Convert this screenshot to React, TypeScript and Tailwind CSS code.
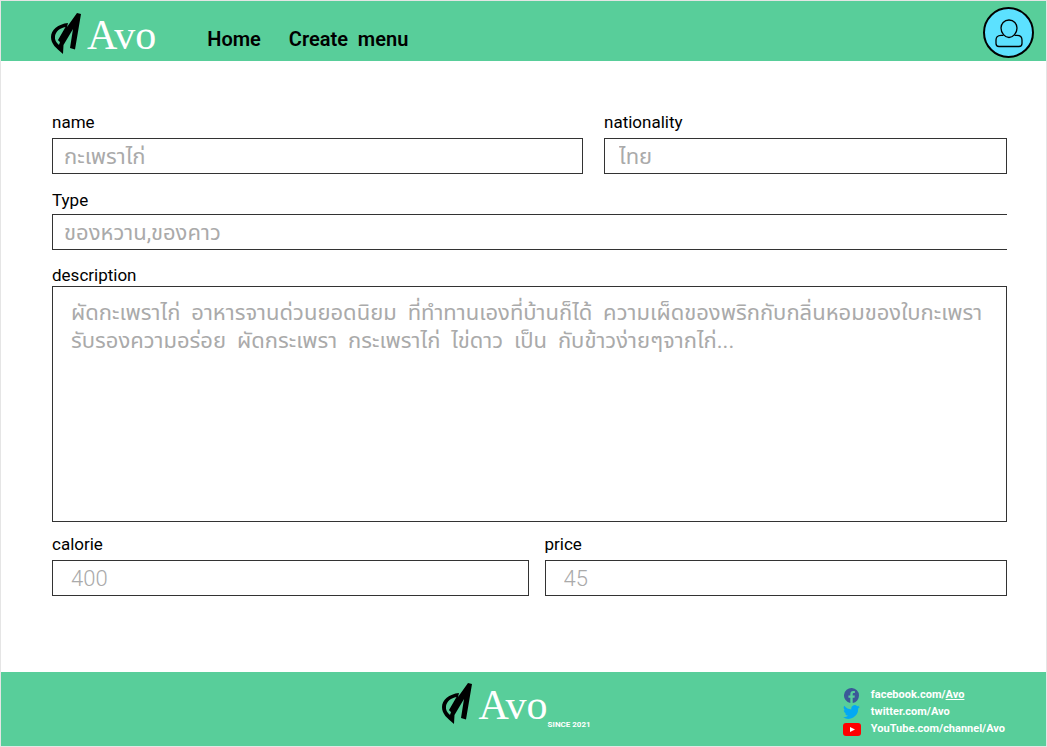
import React from "react";

const thai = "font-['Roboto','Noto_Sans_Thai','Noto_Sans',sans-serif]";
const box =
  "block h-9 w-full border border-[#333] bg-white text-[22px] outline-none placeholder:text-[#aaa] placeholder:opacity-100";

function Logo() {
  return (
    <span className="flex items-start">
      <svg viewBox="0 0 32 44" className="h-11 w-8" aria-hidden="true">
        <path
          fillRule="evenodd"
          d="M17 10 C7 11 0 17 0 24 C0 31 5 35 12 41 L12.500 32 L22 16 L19 35 L24 36.500 L30 1 L26 0 L16 14 Z M14.500 14 L7 27 L9 29 L8 32 C5 29 3.500 27 4 23 C5 18 9 15 14.500 14 Z"
        />
        <path d="M15 15.500 L7.500 27.500 L9.500 29 L17 17 Z" />
      </svg>
      <span className="pl-1 font-['Liberation_Serif',serif] text-[42px] leading-[44px] text-white">
        Avo
      </span>
    </span>
  );
}

type FieldProps = {
  id: string;
  label: string;
  placeholder: string;
  gap: string;
  input: string;
  className?: string;
};

function Field({ id, label, placeholder, gap, input, className = "" }: FieldProps) {
  return (
    <div className={`flex flex-col ${gap} ${className}`}>
      <label htmlFor={id} className="text-[17px] leading-5">
        {label}
      </label>
      <input id={id} placeholder={placeholder} className={`${box} ${input}`} />
    </div>
  );
}

function Facebook() {
  return (
    <svg viewBox="0 0 24 24" className="size-[15px]" aria-hidden="true">
      <path
        fill="#3b5998"
        d="M24 12a12 12 0 1 0-13.9 11.9v-8.4H7.1V12h3V9.4c0-3 1.8-4.7 4.6-4.7 1.3 0 2.7.2 2.7.2v3h-1.5c-1.5 0-2 .9-2 1.9V12h3.4l-.5 3.5h-2.9v8.4A12 12 0 0 0 24 12z"
      />
    </svg>
  );
}

function Twitter() {
  return (
    <svg viewBox="0 2 24 20" className="h-[14px] w-[17px]" aria-hidden="true">
      <path
        fill="#03a9f4"
        d="M24 4.6a10 10 0 0 1-2.8.8 5 5 0 0 0 2.1-2.7 10 10 0 0 1-3.1 1.2 4.9 4.9 0 0 0-8.4 4.5A14 14 0 0 1 1.7 3.1a4.9 4.9 0 0 0 1.5 6.6 5 5 0 0 1-2.2-.6v.1a4.9 4.9 0 0 0 3.9 4.8 5 5 0 0 1-2.2.1 4.9 4.9 0 0 0 4.6 3.4A10 10 0 0 1 0 19.5 14 14 0 0 0 21.5 7.1 10 10 0 0 0 24 4.6z"
      />
    </svg>
  );
}

function YouTube() {
  return (
    <svg viewBox="0 0 18 13" className="h-[13px] w-[18px]" aria-hidden="true">
      <rect width="18" height="13" rx="3" fill="#f00" />
      <path d="M7 4 L12 6.500 L7 9 Z" fill="#fff" />
    </svg>
  );
}

export default function App() {
  return (
    <div
      className={`flex min-h-screen flex-col border-x border-y border-[#e5e5e5] bg-white text-black ${thai}`}
    >
      <header className="flex h-[60px] items-start bg-[#58ce9a] pr-3 pl-[50px]">
        <a href="#home" aria-label="Avo" className="pt-3">
          <Logo />
        </a>
        <nav className="flex gap-7 pt-6 pl-[51px] text-[20px] leading-7 font-semibold whitespace-pre">
          <a href="#home">Home</a>
          <a href="#create">{"Create  menu"}</a>
        </nav>
        <button
          aria-label="Profile"
          className="mt-[6px] ml-auto flex size-[51px] items-center justify-center rounded-full border-2 border-black bg-[#5ce1ff]"
        >
          <svg viewBox="0 0 30 30" className="size-[30px]" fill="none" stroke="#000" strokeWidth="1.300" aria-hidden="true">
            <path d="M15 2 C10 2 7 6 7 10 C7 15 11 19.500 15 19.500 C19 19.500 23 15 23 10 C23 6 20 2 15 2 Z" />
            <path d="M9.500 17.300 H7 C3.500 17.300 2 19.500 2 22 V25.500 C2 27.500 3.200 28.500 5 28.500 H25 C26.800 28.500 28 27.500 28 25.500 V22 C28 19.500 26.500 17.300 23 17.300 H20.500" />
          </svg>
        </button>
      </header>

      <main className="flex-1 pr-[39px] pl-[51px]">
        <form className="flex flex-col pt-[51px]">
          <div className="flex gap-[21px]">
            <Field id="name" label="name" placeholder="กะเพราไก่" gap="gap-[6px]" input="px-[11px]" className="flex-[531]" />
            <Field id="nationality" label="nationality" placeholder="ไทย" gap="gap-[6px]" input="px-[14px]" className="flex-[403]" />
          </div>
          <Field id="type" label="Type" placeholder="ของหวาน,ของคาว" gap="gap-1" input="border-r-0 px-[11px]" className="pt-4" />
          <div className="flex flex-col gap-px pt-[15px]">
            <label htmlFor="description" className="text-[17px] leading-5">
              description
            </label>
            <textarea
              id="description"
              placeholder={
                "ผัดกะเพราไก่  อาหารจานด่วนยอดนิยม  ที่ทำทานเองที่บ้านก็ได้  ความเผ็ดของพริกกับกลิ่นหอมของใบกะเพรา\nรับรองความอร่อย  ผัดกระเพรา  กระเพราไก่  ไข่ดาว  เป็น  กับข้าวง่ายๆจากไก่..."
              }
              className="block h-[236px] w-full resize-none border border-[#333] px-[18px] py-3 text-[22px] leading-7 outline-none placeholder:text-[#aaa] placeholder:opacity-100"
            />
          </div>
          <div className="flex gap-4 pt-3">
            <Field id="calorie" label="calorie" placeholder="400" gap="gap-[6px]" input="px-[18px] font-light" className="flex-[477]" />
            <Field id="price" label="price" placeholder="45" gap="gap-[6px]" input="px-[18px] font-light" className="flex-[463]" />
          </div>
        </form>
      </main>

      <footer className="grid h-[74px] grid-cols-[1fr_auto_1fr] bg-[#58ce9a] text-white">
        <div />
        <div className="flex items-start pt-[11px] pr-[14px]">
          <Logo />
          <span className="pt-9 text-[8px] leading-3 font-bold">SINCE 2021</span>
        </div>
        <ul className="flex flex-col items-start gap-px justify-self-end pt-[15px] pr-[41px] text-[11px] leading-4 font-bold">
          <li className="flex items-center gap-[10px]">
            <span className="flex w-[18px] justify-center"><Facebook /></span>
            <a href="#facebook">facebook.com/<span className="underline">Avo</span></a>
          </li>
          <li className="flex items-center gap-[10px]">
            <span className="flex w-[18px] justify-center"><Twitter /></span>
            <a href="#twitter">twitter.com/Avo</a>
          </li>
          <li className="flex items-center gap-[10px]">
            <span className="flex w-[18px] justify-center"><YouTube /></span>
            <a href="#youtube">YouTube.com/channel/Avo</a>
          </li>
        </ul>
      </footer>
    </div>
  );
}
